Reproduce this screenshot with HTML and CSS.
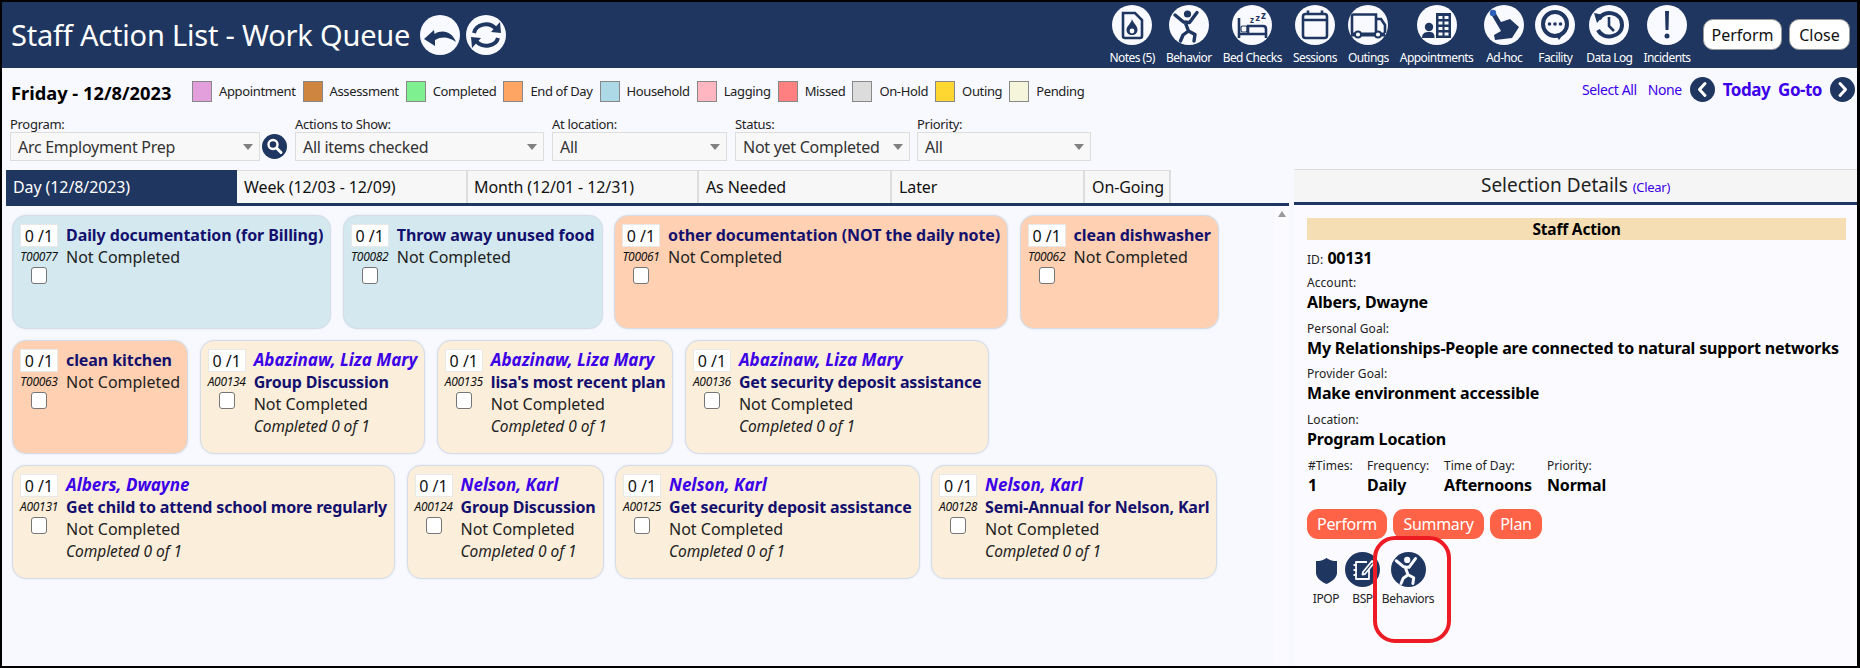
FILE: index.html
```html
<!DOCTYPE html>
<html lang="en">
	<head>
		<meta charset="UTF-8" />
		<title>Staff Action List - Work Queue</title>
		<link rel="stylesheet" href="styles.css">
	</head>
	<body>
		<svg class="defs" width="0" height="0">
			<symbol id="figure" viewBox="0 0 40 40">
				<circle cx="18.500" cy="9" r="3.600" fill="currentColor" />
				<path d="M6 10 L14.500 17 L20.500 17.500 L28 7.500 M16 17 L19.500 26 M19.500 26 L14 30 L11.500 36 M19.500 26 L26 29.500 L25 36" fill="none" stroke="currentColor" stroke-width="3.400" stroke-linecap="round" stroke-linejoin="round" />
			</symbol>
		</svg>

		<div class="page">
			<header class="topbar">
				<h1 class="title">Staff Action List - Work Queue</h1>
				<svg class="circle-icon title-icon" viewBox="0 0 40 40"><circle cx="20" cy="20" r="20" class="disc" /><path class="ink" d="M4 24 L14 15 L14.500 19 C23 14 32 17 36 27 C29 22 22 21 15 25 L15 31 Z" /></svg>
				<svg class="circle-icon title-icon" viewBox="0 0 40 40"><circle cx="20" cy="20" r="20" class="disc" /><path class="line" d="M8 18 C10 9 23 6 30 14 M32 23 C30 31 17 34 10 26" /><path class="ink" d="M25 17 L35 18 L34 7 Z M15 23 L5 22 L6 33 Z" /></svg>

				<nav class="quick-links">
					<div class="quick-link">
						<svg class="circle-icon" viewBox="0 0 40 40"><circle cx="20" cy="20" r="20" class="disc" /><path class="line thin" d="M11 8 H23 L30 15 V31 a2 2 0 0 1 -2 2 H13 a2 2 0 0 1 -2 -2 Z" /><path class="ink" d="M20 14 C21 18 25.500 20 25.500 25 C25.500 28 23 30 20 30 C17 30 14.500 28 14.500 25 C14.500 21 19 19 20 14 Z" /><circle cx="20" cy="26" r="2.400" class="disc" /></svg>
						<span>Notes (5)</span>
					</div>
					<div class="quick-link">
						<svg class="circle-icon figure-dark" viewBox="0 0 40 40"><circle cx="20" cy="20" r="20" class="disc" /><use href="#figure" /></svg>
						<span>Behavior</span>
					</div>
					<div class="quick-link">
						<svg class="circle-icon" viewBox="0 0 40 40"><circle cx="20" cy="20" r="20" class="disc" /><path class="line thin" d="M7 13 V33 M7 29 H34 V33 M34 28 V24 C34 22 33 21 31 21 H16 V28" /><rect class="line hair" x="9" y="21" width="6" height="6" rx="1.500" /><text class="zzz" x="18" y="18" font-size="8">z</text><text class="zzz" x="23.500" y="16" font-size="9">z</text><text class="zzz" x="29" y="14" font-size="10">z</text></svg>
						<span>Bed Checks</span>
					</div>
					<div class="quick-link">
						<svg class="circle-icon" viewBox="0 0 40 40"><circle cx="20" cy="20" r="20" class="disc" /><rect class="line thin" x="8" y="9" width="24" height="24" rx="2.500" /><path class="line thin" d="M8 15 H32 M13 5.500 V10 M27 5.500 V10" /></svg>
						<span>Sessions</span>
					</div>
					<div class="quick-link">
						<svg class="circle-icon" viewBox="0 0 40 40"><circle cx="20" cy="20" r="20" class="disc" /><path class="line thin" d="M4 28 V11 a1.500 1.500 0 0 1 1.500 -1.500 H28 V28 M28 14 H33 L37 20 V28" /><path class="line" d="M3 29.500 H37" /><circle cx="10" cy="29.500" r="3" class="disc" stroke="#1f3660" stroke-width="1.800" /><circle cx="30" cy="29.500" r="3" class="disc" stroke="#1f3660" stroke-width="1.800" /></svg>
						<span>Outings</span>
					</div>
					<div class="quick-link">
						<svg class="circle-icon" viewBox="0 0 40 40"><circle cx="20" cy="20" r="20" class="disc" /><path class="ink" d="M19 8 H34 V33 H19 Z" /><path class="disc" d="M21.500 11 h4 v3 h-4 Z M27.500 11 h4 v3 h-4 Z M21.500 16.500 h4 v3 h-4 Z M27.500 16.500 h4 v3 h-4 Z M21.500 22 h4 v3 h-4 Z M27.500 22 h4 v3 h-4 Z M21.500 27.500 h4 v3 h-4 Z M27.500 27.500 h4 v3 h-4 Z" /><circle cx="12" cy="22" r="4.200" class="ink" /><path class="ink" d="M5 33 C5 28 8 27 12 27 C16 27 17.500 28 17.500 33 Z" /></svg>
						<span>Appointments</span>
					</div>
					<div class="quick-link">
						<svg class="circle-icon" viewBox="0 0 40 40"><circle cx="20" cy="20" r="20" class="disc" /><path class="ink" d="M7 9 L11 7 L17 17 L26 14 L35 22 L28 33 L11 35 L10 30 L17 26 Z" /><circle cx="9" cy="8" r="3.200" fill="#2c5fb8" /></svg>
						<span>Ad-hoc</span>
					</div>
					<div class="quick-link">
						<svg class="circle-icon" viewBox="0 0 40 40"><circle cx="20" cy="20" r="20" class="disc" /><circle cx="20" cy="19" r="12" class="line" /><path class="ink" d="M20 29 L29 28 L24 35 Z" /><circle cx="14.500" cy="19" r="1.800" class="ink" /><circle cx="20" cy="19" r="1.800" class="ink" /><circle cx="25.500" cy="19" r="1.800" class="ink" /></svg>
						<span>Facility</span>
					</div>
					<div class="quick-link">
						<svg class="circle-icon" viewBox="0 0 40 40"><circle cx="20" cy="20" r="20" class="disc" /><path class="line" d="M10 14 C15 4 33 7 33 20 C33 32 15 36 9 25" /><path class="ink" d="M5 8 L15 10 L8 18 Z" /><path class="line thin" d="M20 12 V21 L25 26" /></svg>
						<span>Data Log</span>
					</div>
					<div class="quick-link">
						<svg class="circle-icon" viewBox="0 0 40 40"><circle cx="20" cy="20" r="20" class="disc" /><path class="ink" d="M18 6 H22 L21.500 25 H18.500 Z" /><circle cx="20" cy="31" r="2.500" class="ink" /></svg>
						<span>Incidents</span>
					</div>
				</nav>

				<div class="top-buttons">
					<button class="top-btn btn-perform">Perform</button>
					<button class="top-btn btn-close">Close</button>
				</div>
			</header>

			<section class="legend-row">
				<div class="date-label">Friday - 12/8/2023</div>
				<ul class="legend">
					<li class="legend-item item-appointment"><i></i>Appointment</li>
					<li class="legend-item item-assessment"><i></i>Assessment</li>
					<li class="legend-item item-completed"><i></i>Completed</li>
					<li class="legend-item item-endofday"><i></i>End of Day</li>
					<li class="legend-item item-household"><i></i>Household</li>
					<li class="legend-item item-lagging"><i></i>Lagging</li>
					<li class="legend-item item-missed"><i></i>Missed</li>
					<li class="legend-item item-onhold"><i></i>On-Hold</li>
					<li class="legend-item item-outing"><i></i>Outing</li>
					<li class="legend-item item-pending"><i></i>Pending</li>
				</ul>
				<div class="day-nav">
					<a class="link-small">Select All</a>
					<a class="link-small">None</a>
					<svg class="nav-circle" viewBox="0 0 25 25"><circle cx="12.500" cy="12.500" r="12.500" class="ink" /><path class="chevron" d="M15 6.500 L9.500 12.500 L15 18.500" /></svg>
					<a class="link-big">Today</a>
					<a class="link-big">Go-to</a>
					<svg class="nav-circle" viewBox="0 0 25 25"><circle cx="12.500" cy="12.500" r="12.500" class="ink" /><path class="chevron" d="M10 6.500 L15.500 12.500 L10 18.500" /></svg>
				</div>
			</section>

			<section class="filters">
				<div class="filter filter-program">
					<label>Program:</label>
					<div class="select">Arc Employment Prep</div>
				</div>
				<svg class="search-btn" viewBox="0 0 25 25"><circle cx="12.500" cy="12.500" r="12.500" class="ink" /><circle cx="11" cy="10.500" r="4.500" fill="none" stroke="#fff" stroke-width="2.400" /><path class="chevron" d="M14.500 14 L19 18.500" /></svg>
				<div class="filter filter-actions">
					<label>Actions to Show:</label>
					<div class="select">All items checked</div>
				</div>
				<div class="filter filter-location">
					<label>At location:</label>
					<div class="select">All</div>
				</div>
				<div class="filter filter-status">
					<label>Status:</label>
					<div class="select">Not yet Completed</div>
				</div>
				<div class="filter filter-priority">
					<label>Priority:</label>
					<div class="select">All</div>
				</div>
			</section>

			<div class="workspace">
				<main class="queue">
					<div class="tabs">
						<div class="tab tab-day active">Day (12/8/2023)</div>
						<div class="tab tab-week">Week (12/03 - 12/09)</div>
						<div class="tab tab-month">Month (12/01 - 12/31)</div>
						<div class="tab tab-needed">As Needed</div>
						<div class="tab tab-later">Later</div>
						<div class="tab tab-going">On-Going</div>
					</div>
					<div class="queue-body">
						<div class="cards">
							<article class="card household">
								<div class="card-side"><div class="count">0 /1</div><div class="code">T00077</div><input type="checkbox" class="card-check"></div>
								<div class="card-text"><div class="card-title">Daily documentation (for Billing)</div><div>Not Completed</div></div>
							</article>
							<article class="card household">
								<div class="card-side"><div class="count">0 /1</div><div class="code">T00082</div><input type="checkbox" class="card-check"></div>
								<div class="card-text"><div class="card-title">Throw away unused food</div><div>Not Completed</div></div>
							</article>
							<article class="card endofday">
								<div class="card-side"><div class="count">0 /1</div><div class="code">T00061</div><input type="checkbox" class="card-check"></div>
								<div class="card-text"><div class="card-title">other documentation (NOT the daily note)</div><div>Not Completed</div></div>
							</article>
							<article class="card endofday">
								<div class="card-side"><div class="count">0 /1</div><div class="code">T00062</div><input type="checkbox" class="card-check"></div>
								<div class="card-text"><div class="card-title">clean dishwasher</div><div>Not Completed</div></div>
							</article>

							<article class="card endofday">
								<div class="card-side"><div class="count">0 /1</div><div class="code">T00063</div><input type="checkbox" class="card-check"></div>
								<div class="card-text"><div class="card-title">clean kitchen</div><div>Not Completed</div></div>
							</article>
							<article class="card action">
								<div class="card-side"><div class="count">0 /1</div><div class="code">A00134</div><input type="checkbox" class="card-check"></div>
								<div class="card-text"><div class="card-name">Abazinaw, Liza Mary</div><div class="card-title">Group Discussion</div><div>Not Completed</div><div class="card-note">Completed 0 of 1</div></div>
							</article>
							<article class="card action">
								<div class="card-side"><div class="count">0 /1</div><div class="code">A00135</div><input type="checkbox" class="card-check"></div>
								<div class="card-text"><div class="card-name">Abazinaw, Liza Mary</div><div class="card-title">lisa's most recent plan</div><div>Not Completed</div><div class="card-note">Completed 0 of 1</div></div>
							</article>
							<article class="card action">
								<div class="card-side"><div class="count">0 /1</div><div class="code">A00136</div><input type="checkbox" class="card-check"></div>
								<div class="card-text"><div class="card-name">Abazinaw, Liza Mary</div><div class="card-title">Get security deposit assistance</div><div>Not Completed</div><div class="card-note">Completed 0 of 1</div></div>
							</article>

							<article class="card action">
								<div class="card-side"><div class="count">0 /1</div><div class="code">A00131</div><input type="checkbox" class="card-check"></div>
								<div class="card-text"><div class="card-name">Albers, Dwayne</div><div class="card-title">Get child to attend school more regularly</div><div>Not Completed</div><div class="card-note">Completed 0 of 1</div></div>
							</article>
							<article class="card action">
								<div class="card-side"><div class="count">0 /1</div><div class="code">A00124</div><input type="checkbox" class="card-check"></div>
								<div class="card-text"><div class="card-name">Nelson, Karl</div><div class="card-title">Group Discussion</div><div>Not Completed</div><div class="card-note">Completed 0 of 1</div></div>
							</article>
							<article class="card action">
								<div class="card-side"><div class="count">0 /1</div><div class="code">A00125</div><input type="checkbox" class="card-check"></div>
								<div class="card-text"><div class="card-name">Nelson, Karl</div><div class="card-title">Get security deposit assistance</div><div>Not Completed</div><div class="card-note">Completed 0 of 1</div></div>
							</article>
							<article class="card action">
								<div class="card-side"><div class="count">0 /1</div><div class="code">A00128</div><input type="checkbox" class="card-check"></div>
								<div class="card-text"><div class="card-name">Nelson, Karl</div><div class="card-title">Semi-Annual for Nelson, Karl</div><div>Not Completed</div><div class="card-note">Completed 0 of 1</div></div>
							</article>
						</div>
						<div class="scroll-track"><span class="scroll-up"></span></div>
					</div>
				</main>

				<aside class="details">
					<div class="details-head">Selection Details <a class="clear-link">(Clear)</a></div>
					<div class="details-body">
						<div class="details-banner">Staff Action</div>
						<div class="id-row"><span class="field-label">ID:</span> <b>00131</b></div>
						<div class="field"><div class="field-label">Account:</div><b>Albers, Dwayne</b></div>
						<div class="field"><div class="field-label">Personal Goal:</div><b>My Relationships-People are connected to natural support networks</b></div>
						<div class="field"><div class="field-label">Provider Goal:</div><b>Make environment accessible</b></div>
						<div class="field"><div class="field-label">Location:</div><b>Program Location</b></div>
						<div class="field-columns">
							<div class="col-times"><div class="field-label">#Times:</div><b>1</b></div>
							<div class="col-frequency"><div class="field-label">Frequency:</div><b>Daily</b></div>
							<div class="col-time"><div class="field-label">Time of Day:</div><b>Afternoons</b></div>
							<div><div class="field-label">Priority:</div><b>Normal</b></div>
						</div>
						<div class="action-buttons">
							<button class="action-btn">Perform</button>
							<button class="action-btn">Summary</button>
							<button class="action-btn">Plan</button>
						</div>
						<div class="detail-links">
							<div class="detail-link link-ipop">
								<svg class="shield" viewBox="0 0 21 26"><path class="ink" d="M10.500 0 C14 2.500 17 3 21 3 V15 C21 20 15 24 10.500 26 C6 24 0 20 0 15 V3 C4 3 7 2.500 10.500 0 Z" /></svg>
								<span>IPOP</span>
							</div>
							<div class="detail-link link-bsp">
								<svg class="detail-icon" viewBox="0 0 35 35"><circle cx="17.500" cy="17.500" r="17.500" class="ink" /><path class="note-line" d="M22 10 H11 V27 H24 V17 M8.500 13 H12 M8.500 18 H12 M8.500 23 H12 M18 20 L27 9 L29 11 L20 22 L17.500 22.500 Z" /></svg>
								<span>BSP</span>
							</div>
							<div class="detail-link link-behaviors">
								<svg class="detail-icon figure-light" viewBox="0 0 40 40"><circle cx="20" cy="20" r="20" class="ink" /><use href="#figure" /></svg>
								<span>Behaviors</span>
							</div>
						</div>
						<div class="callout"></div>
					</div>
				</aside>
			</div>
		</div>
	</body>
</html>
```
FILE: styles.css
```css
* {
	margin: 0;
	padding: 0;
	box-sizing: border-box;
}

body {
	background: #000;
	font-family: 'Noto Sans', 'Open Sans', sans-serif;
	font-size: 16px;
	color: #111;
	width: 1860px;
	height: 668px;
	overflow: hidden;
}

.defs {
	position: absolute;
}

.disc {
	fill: #f9faff;
}

.ink {
	fill: #1f3660;
}

.line {
	fill: none;
	stroke: #1f3660;
	stroke-width: 4;
}

.line.thin {
	stroke-width: 2.6;
}

.line.hair {
	stroke-width: 1.2;
}

.chevron {
	fill: none;
	stroke: #fff;
	stroke-width: 3;
	stroke-linecap: round;
	stroke-linejoin: round;
}

.zzz {
	fill: #1f3660;
	font-family: 'Noto Sans', sans-serif;
	font-weight: 700;
}

.figure-dark {
	color: #1f3660;
}

.figure-light {
	color: #f9faff;
}

.page {
	position: absolute;
	top: 2px;
	left: 2px;
	width: 1855px;
	height: 664px;
	background: #f8f9ff;
	display: flex;
	flex-direction: column;
}

/* top bar */
.topbar {
	height: 66px;
	flex: none;
	background: #1f3660;
	display: flex;
	align-items: flex-start;
	color: #fff;
}

.title {
	font-size: 29px;
	font-weight: 400;
	line-height: 40px;
	margin: 13px 10px 0 9px;
	letter-spacing: -0.2px;
	white-space: nowrap;
}

.circle-icon {
	width: 40px;
	height: 40px;
	display: block;
}

.title-icon {
	margin: 13px 6px 0 0;
}

.quick-links {
	display: flex;
	gap: 11px;
	margin-left: auto;
	margin-right: 12.500px;
	padding-top: 3px;
}

.quick-link {
	display: flex;
	flex-direction: column;
	align-items: center;
	font-size: 12px;
	letter-spacing: -0.55px;
	line-height: 16px;
	white-space: nowrap;
	gap: 5px;
}

.top-buttons {
	display: flex;
	gap: 7px;
	margin-top: 17px;
	margin-right: 7px;
}

.top-btn {
	height: 31px;
	background: #fff;
	border: 1px solid #999;
	border-radius: 10px;
	font-family: inherit;
	font-size: 16px;
	color: #111;
}

.btn-perform {
	width: 79px;
}

.btn-close {
	width: 61px;
}

/* legend */
.legend-row {
	height: 47px;
	flex: none;
	padding: 13px 2px 0 9px;
	display: flex;
	align-items: flex-start;
}

.date-label {
	font-size: 18.300px;
	font-weight: 700;
	line-height: 24px;
	width: 181px;
	color: #000;
}

.legend {
	display: flex;
	list-style: none;
	gap: 7px;
	font-size: 13px;
	line-height: 20px;
	color: #222;
}

.legend-item {
	display: flex;
	gap: 7px;
	letter-spacing: -0.36px;
}

.legend-item i {
	width: 20px;
	height: 21px;
	border: 1px solid #888;
	display: block;
}

.item-appointment i { background: #e39fdb; }
.item-assessment i { background: #cd853f; }
.item-completed i { background: #7ef08f; }
.item-endofday i { background: #ffa564; }
.item-household i { background: #add8e6; }
.item-lagging i { background: #ffb6c1; }
.item-missed i { background: #ff8080; }
.item-onhold i { background: #dcdcdc; }
.item-outing i { background: #ffd730; }
.item-pending i { background: #f5f5dc; }

.day-nav {
	margin-left: auto;
	display: flex;
	align-items: center;
	gap: 8px;
	height: 25px;
	margin-top: -4px;
	color: #3c00e8;
}

.link-small {
	font-size: 14px;
	letter-spacing: -0.4px;
	margin-right: 3px;
}

.link-small + .link-small {
	margin-right: 0;
}

.link-big {
	font-size: 17px;
	font-weight: 700;
	letter-spacing: -0.5px;
}

.nav-circle {
	width: 25px;
	height: 25px;
}

/* filters */
.filters {
	height: 46px;
	flex: none;
	display: flex;
	align-items: flex-end;
	padding-left: 8px;
}

.filter label {
	display: block;
	font-size: 13px;
	line-height: 16px;
	letter-spacing: -0.3px;
	color: #222;
}

.select {
	position: relative;
	height: 29px;
	background: #f8f8f8;
	border: 1px solid #ddd;
	font-size: 16px;
	line-height: 29px;
	padding-left: 7px;
	color: #333;
	letter-spacing: -0.28px;
}

.select:after {
	content: '';
	position: absolute;
	top: 11px;
	right: 6px;
	border-left: 5px solid transparent;
	border-right: 5px solid transparent;
	border-top: 6px solid #808080;
}

.filter-program { width: 250px; }
.filter-actions { width: 249px; margin-right: 8px; }
.filter-location { width: 175px; margin-right: 8px; }
.filter-status { width: 175px; margin-right: 7px; }
.filter-priority { width: 174px; }

.search-btn {
	width: 25px;
	height: 25px;
	margin: 0 8px 2px 2px;
	flex: none;
}

/* work area */
.workspace {
	flex: 1;
	display: flex;
	margin-top: 8px;
	min-height: 0;
}

.queue {
	width: 1287px;
	flex: none;
	margin-right: 5px;
	display: flex;
	flex-direction: column;
	padding-left: 4px;
	padding-top: 1px;
}

.tabs {
	display: flex;
	height: 36px;
	flex: none;
	border-bottom: 3px solid #1f3660;
	font-size: 16px;
	line-height: 33px;
	letter-spacing: -0.1px;
}

.tab {
	background: #f7f7f7;
	border-top: 1px solid #ddd;
	border-right: 2px solid #ddd;
	padding-left: 7px;
	color: #111;
	white-space: nowrap;
}

.tab.active {
	background: #1f3660;
	color: #fff;
	border-color: #1f3660;
}

.tab-day { width: 231px; }
.tab-week { width: 231px; }
.tab-month { width: 231px; padding-left: 6px; }
.tab-needed { width: 193px; }
.tab-later { width: 193px; }
.tab-going { width: 86px; }

.queue-body {
	flex: 1;
	display: flex;
	min-height: 0;
}

.cards {
	flex: 1;
	display: flex;
	flex-wrap: wrap;
	align-content: flex-start;
	gap: 11.500px;
	padding: 9px 40px 0 6px;
}

.card {
	height: 113.500px;
	display: flex;
	gap: 8px;
	padding: 8px 7px 0 7px;
	border: 1px solid #d5dce8;
	border-radius: 14px;
	line-height: 22px;
	font-size: 16px;
	box-shadow: 0 0 2px #dde3ee;
}

.card.household { background: #d3e9ef; }
.card.endofday { background: #ffd0b1; }
.card.action { background: #fbeeda; }

.card-side {
	width: 38px;
	flex: none;
	display: flex;
	flex-direction: column;
	align-items: center;
}

.count {
	width: 38px;
	height: 23px;
	background: #fff;
	border: 1px solid #e8e8e8;
	text-align: center;
	font-size: 16px;
	line-height: 22px;
}

.code {
	font-size: 12px;
	font-style: italic;
	line-height: 16px;
	margin-top: 2px;
	letter-spacing: -0.3px;
	white-space: nowrap;
}

.card-check {
	appearance: none;
	width: 16px;
	height: 17px;
	background: #fff;
	border: 1px solid #767676;
	border-radius: 3px;
	margin-top: 2px;
}

.card-text {
	white-space: nowrap;
	color: #222;
}

.card-title {
	font-weight: 700;
	color: #14106e;
	letter-spacing: -0.08px;
}

.card.action .card-title {
	letter-spacing: -0.16px;
}

.card-name {
	font-weight: 700;
	font-style: italic;
	font-size: 17px;
	color: #3c00e8;
}

.card-note {
	font-style: italic;
	font-size: 15.500px;
	letter-spacing: -0.05px;
}

.scroll-track {
	width: 15px;
	flex: none;
	background: #fbfbff;
	display: flex;
	justify-content: center;
	padding-top: 5px;
}

.scroll-up {
	width: 0;
	height: 0;
	border-left: 4px solid transparent;
	border-right: 4px solid transparent;
	border-bottom: 6px solid #999;
}

/* selection details */
.details {
	flex: 1;
	display: flex;
	flex-direction: column;
	background: #fbfbff;
}

.details-head {
	height: 36px;
	flex: none;
	background: #f5f5f5;
	border-top: 1px solid #ddd;
	border-bottom: 3px solid #1f3660;
	text-align: center;
	font-size: 19px;
	line-height: 30px;
	color: #222;
}

.clear-link {
	font-size: 13px;
	color: #3c00e8;
	letter-spacing: -0.3px;
}

.details-body {
	position: relative;
	padding: 13px 11px 0 13px;
}

.details-banner {
	height: 22px;
	background: #f5deb3;
	text-align: center;
	font-size: 15.500px;
	font-weight: 700;
	line-height: 22px;
	color: #000;
	letter-spacing: -0.2px;
}

.details-body b {
	font-size: 16px;
	font-weight: 700;
	line-height: 22px;
	color: #000;
	letter-spacing: -0.18px;
	white-space: nowrap;
}

.field-label {
	font-size: 12px;
	line-height: 16px;
	letter-spacing: 0.05px;
	color: #222;
}

.id-row {
	margin-top: 7px;
	height: 22px;
}

.field {
	height: 45.500px;
	padding-top: 6px;
}

.field-columns {
	display: flex;
	margin-top: 7px;
	padding-left: 1px;
}

.col-times { width: 59px; }
.col-frequency { width: 77px; }
.col-time { width: 103px; }

.action-buttons {
	display: flex;
	gap: 6.500px;
	margin-top: 13px;
}

.action-btn {
	height: 30px;
	padding: 0 10px;
	background: #ff6347;
	border: none;
	border-radius: 11px;
	font-family: inherit;
	font-size: 16px;
	color: #fff;
	letter-spacing: -0.3px;
}

.detail-links {
	display: flex;
	margin-top: 13px;
	height: 66px;
	font-size: 12px;
	letter-spacing: -0.4px;
	line-height: 16px;
	color: #222;
	text-align: center;
}

.detail-link {
	display: flex;
	flex-direction: column;
	align-items: center;
}

.detail-link span {
	margin-top: 4px;
}

.link-ipop {
	width: 38px;
}

.shield {
	width: 21px;
	height: 26px;
	margin: 6px 0 3px;
}

.link-bsp {
	width: 35px;
}

.detail-icon {
	width: 35px;
	height: 35px;
	display: block;
}

.link-behaviors {
	margin-left: 3px;
	width: 50px;
}

.note-line {
	fill: none;
	stroke: #f9faff;
	stroke-width: 1.800;
	stroke-linejoin: round;
}

.callout {
	position: absolute;
	left: 79px;
	top: 331px;
	width: 78px;
	height: 107px;
	border: 4px solid #ed1c24;
	border-radius: 22px;
}
```
